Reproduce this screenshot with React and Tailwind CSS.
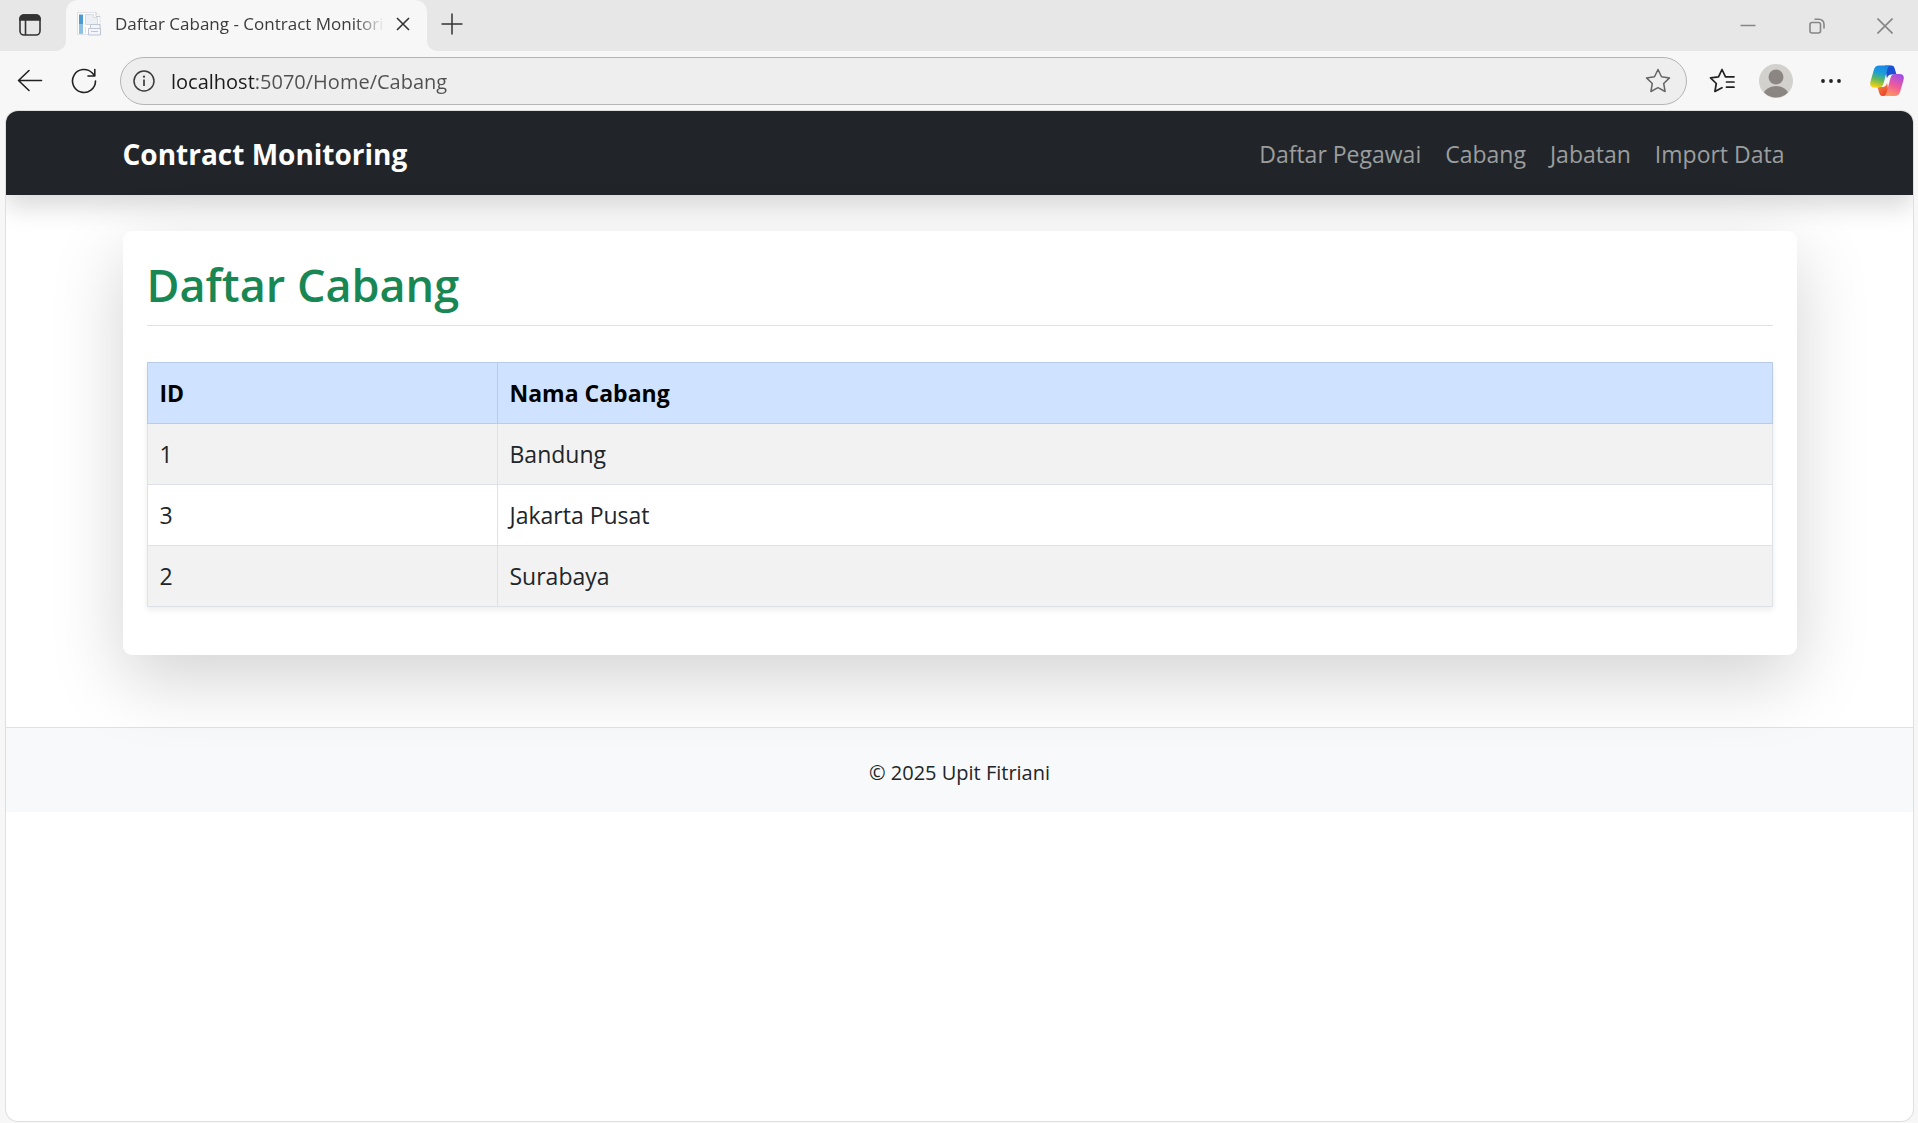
import React from "react";

const branches = [
  { id: 1, name: "Bandung" },
  { id: 3, name: "Jakarta Pusat" },
  { id: 2, name: "Surabaya" },
];

const links = ["Daftar Pegawai", "Cabang", "Jabatan", "Import Data"];

function TabStrip() {
  return (
    <div className="flex h-[51px] items-stretch bg-[#f7f7f7] text-[#3b3b3b]">
      <button aria-label="Tab actions" className="flex w-[66px] items-center justify-center rounded-br-[10px] bg-[#e7e7e7] pb-0.5 pr-1.5">
        <svg width="24" height="24" viewBox="0 0 24 24" fill="none" stroke="#333" strokeWidth="1.6">
          <rect x="2" y="2" width="20" height="20" rx="4" />
          <path d="M2 7V6a4 4 0 0 1 4-4h12a4 4 0 0 1 4 4v1z" fill="#333" />
          <path d="M7.500 7v15" />
        </svg>
      </button>
      <div className="flex bg-[linear-gradient(#e7e7e7_50%,#f7f7f7_50%)]">
        <div className="flex w-[361px] items-center rounded-t-[12px] bg-[#f7f7f7] pb-[3px] pl-[11px] pr-2">
          <svg width="24" height="24" viewBox="0 0 24 24" className="shrink-0">
            <path d="M.500.500h18.500l4 4v18h-22.500z" fill="#fff" stroke="#dfe2e6" />
            <path d="M2 2.500h4v19H2z" fill="#4b9bd2" />
            <path d="M2 12h4v9.500H2z" fill="#8ac0e4" />
            <path d="M8.500 2.500h8v3h4v7h-12z" fill="#eceff3" stroke="#d5dae0" />
            <path d="M8.500 15v6" stroke="#dde1e6" />
            <path d="M19 .500v4h4" fill="none" stroke="#c6cbd2" />
            <path d="M13.500 12.500h9.500v4h-9.500zM11.500 16.500h12v6.500h-12z" fill="#f3f5fa" stroke="#bec5d3" />
            <path d="M14 19.500h7" stroke="#bec5d3" />
          </svg>
          <span className="ml-3.5 flex-1 overflow-hidden whitespace-nowrap text-[17px] [mask-image:linear-gradient(90deg,#000_88%,transparent_99%)]">
            Daftar Cabang - Contract Monitoring
          </span>
          <button aria-label="Close tab" className="flex h-8 w-8 items-center justify-center">
            <svg width="14" height="14" viewBox="0 0 14 14" stroke="#333" strokeWidth="1.6">
              <path d="M1 1l12 12M13 1L1 13" />
            </svg>
          </button>
        </div>
      </div>
      <div className="flex flex-1 justify-between rounded-bl-[10px] bg-[#e7e7e7]">
        <button aria-label="New tab" className="flex w-[50px] items-center justify-center pb-1">
          <svg width="22" height="22" viewBox="0 0 22 22" stroke="#333" strokeWidth="1.5">
            <path d="M11 .500v21M.500 11h21" />
          </svg>
        </button>
        <div className="flex">
          <button aria-label="Minimize" className="flex w-[69px] items-center justify-center">
            <svg width="16" height="16" viewBox="0 0 16 16" stroke="#868686" strokeWidth="1.5">
              <path d="M.500 7.500h15" />
            </svg>
          </button>
          <button aria-label="Restore" className="flex w-[69px] items-center justify-center">
            <svg width="16" height="16" viewBox="0 0 16 16" fill="none" stroke="#868686" strokeWidth="1.6">
              <rect x="1" y="4.500" width="10.500" height="10.500" rx="2" />
              <path d="M5.500 1.200h4.500a5 5 0 0 1 5 5V10.500" />
            </svg>
          </button>
          <button aria-label="Close window" className="flex w-[67px] items-center justify-center">
            <svg width="16" height="16" viewBox="0 0 16 16" stroke="#868686" strokeWidth="1.6">
              <path d="M.500.500l15 15M15.500.500l-15 15" />
            </svg>
          </button>
        </div>
      </div>
    </div>
  );
}

function Copilot() {
  return (
    <svg width="34" height="32" viewBox="0 0 34 32">
      <defs>
        <linearGradient id="cpLeft" x1="0.6" y1="0" x2="0.35" y2="1">
          <stop offset="0" stopColor="#1a86e8" />
          <stop offset="0.35" stopColor="#1b9fd8" />
          <stop offset="0.65" stopColor="#62b85a" />
          <stop offset="1" stopColor="#f9cf12" />
        </linearGradient>
        <linearGradient id="cpRight" x1="0.7" y1="0" x2="0.3" y2="1">
          <stop offset="0" stopColor="#a24de8" />
          <stop offset="0.5" stopColor="#ee5a9b" />
          <stop offset="1" stopColor="#ff9a5a" />
        </linearGradient>
        <linearGradient id="cpTop" x1="0" y1="0" x2="1" y2="1">
          <stop offset="0" stopColor="#1d4fd0" />
          <stop offset="1" stopColor="#1a4fd8" />
        </linearGradient>
        <linearGradient id="cpBottom" x1="0" y1="0" x2="0.6" y2="1">
          <stop offset="0" stopColor="#fb8a3c" />
          <stop offset="1" stopColor="#e8452f" />
        </linearGradient>
      </defs>
      <path d="M15 .500h6.500c1.700 0 2.600 1 3.200 3l1.800 6h-5c-2.500 0-3.700 1.200-4.600 4z" fill="url(#cpTop)" />
      <path d="M19 31h-6.500c-1.700 0-2.600-1-3.200-3L7.500 22h5c2.500 0 3.700-1.200 4.600-4z" fill="url(#cpBottom)" />
      <path d="M9.500.500H21c-2 0-3 1.500-3.700 4L13.800 17.500c-.9 3.200-2 5-4.800 5H4.500c-3.800 0-5-2.300-4-6L3.800 5C4.700 1.800 6.300.500 9.500.500z" fill="url(#cpLeft)" />
      <path d="M24.500 31H13c2 0 3-1.500 3.700-4l3.500-13c.9-3.200 2-5 4.800-5h4.500c3.800 0 5 2.300 4 6l-3.300 11.500c-.9 3.200-2.500 4.500-5.700 4.500z" fill="url(#cpRight)" />
    </svg>
  );
}

function Toolbar() {
  return (
    <div className="flex h-[60px] items-center bg-[#f7f7f7] pr-3.5 text-[#222]">
      <button aria-label="Back" className="ml-4 flex w-7 justify-center">
        <svg width="26" height="24" viewBox="0 0 26 24" fill="none" stroke="#222" strokeWidth="1.6" strokeLinecap="round" strokeLinejoin="round">
          <path d="M24.500 11.500H1.500M12 1.500L1.500 11.500l10.500 10" />
        </svg>
      </button>
      <button aria-label="Refresh" className="ml-[26px] flex w-7 justify-center">
        <svg width="26" height="26" viewBox="0 0 26 26" fill="none" stroke="#222" strokeWidth="1.6" strokeLinecap="round" strokeLinejoin="round">
          <path d="M24.500 13A11.500 11.500 0 1 1 21.300 5L23.800 8M23.800 1.500V8H17" />
        </svg>
      </button>
      <div className="ml-[22px] flex h-12 flex-1 items-center rounded-full border border-[#b5b5b5] bg-[#eeeeee] pl-3 pr-[15px]">
        <button aria-label="Site information">
          <svg width="22" height="22" viewBox="0 0 22 22" fill="none" stroke="#3b3b3b" strokeWidth="1.5">
            <circle cx="11" cy="11" r="10" />
            <path d="M11 9.500V16" strokeWidth="1.7" />
            <circle cx="11" cy="6.700" r="1.100" fill="#3b3b3b" stroke="none" />
          </svg>
        </button>
        <input
          aria-label="Address"
          defaultValue="localhost:5070/Home/Cabang"
          className="ml-4 min-w-0 flex-1 bg-[linear-gradient(90deg,#1b1b1b_84px,#505050_84px)] bg-clip-text pt-0.5 text-[20px] text-transparent outline-none"
        />
        <button aria-label="Add to favorites">
          <svg width="26" height="26" viewBox="0 0 26 26" fill="none" stroke="#666" strokeWidth="1.5" strokeLinejoin="round">
            <path d="M13 1.500l3.500 7.300 8 1.100-5.800 5.600 1.400 8L13 19.700l-7.100 3.800 1.400-8L1.500 9.900l8-1.100z" />
          </svg>
        </button>
      </div>
      <button aria-label="Favorites" className="ml-[22px]">
        <svg width="27" height="26" viewBox="0 0 27 26" fill="none" stroke="#222" strokeWidth="1.7" strokeLinecap="round" strokeLinejoin="round">
          <path d="M16.500 8.800L13 1.500 9.500 8.800l-8 1.100 5.800 5.600-1.400 8L13 19.700M16.500 8.800H25M17.500 14h7.500M17.500 19.200h7.500" />
        </svg>
      </button>
      <button aria-label="Profile" className="ml-[23px]">
        <svg width="34" height="34" viewBox="0 0 34 34">
          <defs>
            <clipPath id="avatar"><circle cx="17" cy="17" r="16.500" /></clipPath>
          </defs>
          <circle cx="17" cy="17" r="17" fill="#d3d1cd" />
          <g clipPath="url(#avatar)" fill="#8c8683">
            <circle cx="17" cy="13" r="7.500" />
            <ellipse cx="17" cy="31.500" rx="12.500" ry="9.500" />
          </g>
        </svg>
      </button>
      <button aria-label="Settings and more" className="ml-7">
        <svg width="20" height="6" viewBox="0 0 20 6" fill="#222">
          <circle cx="2" cy="3" r="1.900" />
          <circle cx="10" cy="3" r="1.900" />
          <circle cx="18" cy="3" r="1.900" />
        </svg>
      </button>
      <button aria-label="Copilot" className="ml-[29px]">
        <Copilot />
      </button>
    </div>
  );
}

export default function App() {
  return (
    <div className="flex min-h-screen flex-col bg-[#f7f7f7] font-['Open_Sans','Noto_Sans',sans-serif]">
      <TabStrip />
      <Toolbar />
      <div className="mb-0.5 ml-1.5 mr-[5px] flex-1 overflow-hidden rounded-xl bg-white shadow-[0_0_0_1px_#dfdfdf]">
        <header className="relative bg-[#212529] shadow-[0_12px_24px_rgba(0,0,0,0.15)]">
          <nav className="mx-auto flex h-[84px] max-w-[1710px] items-center justify-between px-[18px] pt-0.5">
            <a href="#" className="text-[28px] font-bold text-white">Contract Monitoring</a>
            <ul className="flex gap-6 pr-3 text-[23px] text-[#9b9d9e]">
              {links.map((l) => (
                <li key={l}><a href="#">{l}</a></li>
              ))}
            </ul>
          </nav>
        </header>
        <main className="mx-auto mt-9 max-w-[1710px] px-[18px]">
          <section className="relative rounded-[9px] bg-white px-6 pb-12 pt-6 shadow-[0_24px_72px_rgba(0,0,0,0.175)]">
            <h1 className="mb-9 h-[71px] border-b border-[#dee2e6] text-[45px] font-semibold leading-[60px] text-[#198754]">
              Daftar Cabang
            </h1>
            <table className="w-full border-collapse text-left text-[23px] leading-9 text-[#212529] shadow-[0_3px_6px_rgba(0,0,0,0.075)]">
              <thead>
                <tr className="bg-[#cfe2ff] text-black">
                  <th scope="col" className="w-[350px] border border-[#bacbe6] p-3 font-bold">ID</th>
                  <th scope="col" className="border border-[#bacbe6] p-3 font-bold">Nama Cabang</th>
                </tr>
              </thead>
              <tbody>
                {branches.map((b) => (
                  <tr key={b.id} className="odd:bg-[#f2f2f2]">
                    <td className="border border-[#dee2e6] p-3">{b.id}</td>
                    <td className="border border-[#dee2e6] p-3">{b.name}</td>
                  </tr>
                ))}
              </tbody>
            </table>
          </section>
        </main>
        <footer className="mt-[72px] flex h-[85px] items-center justify-center border-t border-[#dee2e6] bg-[#f8f9fa] pt-1.5 text-[20px] text-[#212529]">
          <p>© 2025 Upit Fitriani</p>
        </footer>
      </div>
    </div>
  );
}
